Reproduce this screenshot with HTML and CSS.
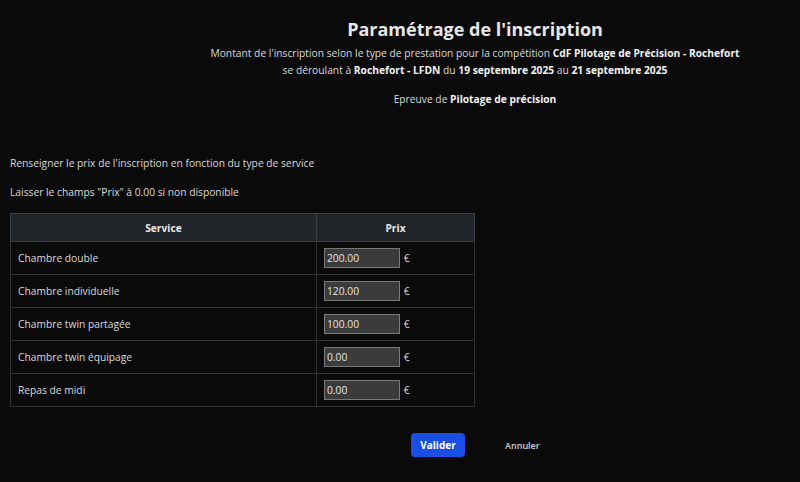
FILE: index.html
```html
<!DOCTYPE html>
<html lang="fr">
<head>
<meta charset="utf-8">
<title>Paramétrage de l'inscription</title>
<link rel="stylesheet" href="styles.css">
</head>
<body>
<div class="page">
  <header class="head">
    <h1 class="title">Paramétrage de l'inscription</h1>
    <p class="sub">Montant de l'inscription selon le type de prestation pour la compétition <b>CdF Pilotage de Précision - Rochefort</b><br>se déroulant à <b>Rochefort - LFDN</b> du <b>19 septembre 2025</b> au <b>21 septembre 2025</b></p>
    <p class="epreuve">Epreuve de <b>Pilotage de précision</b></p>
  </header>
  <section class="form">
    <p class="hint">Renseigner le prix de l'inscription en fonction du type de service</p>
    <p class="hint">Laisser le champs "Prix" à 0.00 si non disponible</p>
    <table class="grid">
      <thead>
        <tr><th class="c-service">Service</th><th class="c-prix">Prix</th></tr>
      </thead>
      <tbody>
        <tr><td>Chambre double</td><td><input class="price" value="200.00"> <span class="eur">€</span></td></tr>
        <tr><td>Chambre individuelle</td><td><input class="price" value="120.00"> <span class="eur">€</span></td></tr>
        <tr><td>Chambre twin partagée</td><td><input class="price" value="100.00"> <span class="eur">€</span></td></tr>
        <tr><td>Chambre twin équipage</td><td><input class="price" value="0.00"> <span class="eur">€</span></td></tr>
        <tr><td>Repas de midi</td><td><input class="price" value="0.00"> <span class="eur">€</span></td></tr>
      </tbody>
    </table>
    <div class="actions">
      <button class="btn-primary">Valider</button>
      <button class="btn-link">Annuler</button>
    </div>
  </section>
</div>
</body>
</html>
```
FILE: styles.css
```css
html, body {
  margin: 0;
  padding: 0;
  background: #0a0a0b;
  color: #d9d9d9;
  font-family: "Open Sans", "Noto Sans", sans-serif;
  font-size: 10.25px;
}
.page {
  width: 800px;
  height: 482px;
  overflow: hidden;
}
.head {
  margin-left: 150px;
  text-align: center;
  padding-top: 17px;
}
.title {
  margin: 0;
  font-size: 18px;
  font-weight: 700;
  color: #e6e6e6;
  line-height: 24px;
}
.sub {
  margin: 4px 0 0;
  line-height: 17px;
}
.sub b, .epreuve b {
  color: #f2f2f2;
}
.epreuve {
  margin: 12px 0 0;
  line-height: 17px;
}
.form {
  padding: 0 10px;
  margin-top: 47px;
}
.hint {
  margin: 0 0 12px;
  line-height: 17px;
}
.grid {
  width: 465px;
  border-collapse: collapse;
  margin-top: 3px;
}
.grid th, .grid td {
  border: 1px solid #2e3236;
  text-align: left;
  padding: 0 7px;
  height: 32px;
}
.grid th {
  background: #212529;
  text-align: center;
  font-weight: 700;
  color: #e8e8e8;
  height: 27px;
  border-color: #3a3f44;
}
.c-service { width: 291px; }
.price {
  width: 70px;
  height: 16px;
  padding: 1px 2px;
  background: #3b3b3b;
  border: 1px solid #7a7a7a;
  color: #e6e6e6;
  font-family: inherit;
  font-size: 10.25px;
  margin: 0;
}
.eur { margin-left: 1px; }
.actions {
  display: flex;
  align-items: center;
  margin-top: 26px;
  margin-left: 401px;
  gap: 34px;
}
.btn-primary {
  background: #1a4fe6;
  color: #fff;
  border: 0;
  border-radius: 4px;
  font-family: inherit;
  font-size: 10px;
  font-weight: 700;
  width: 54px;
  height: 24px;
}
.btn-link {
  background: none;
  border: 0;
  color: #d0d0d0;
  font-family: inherit;
  font-size: 9px;
  font-weight: 600;
}
```
